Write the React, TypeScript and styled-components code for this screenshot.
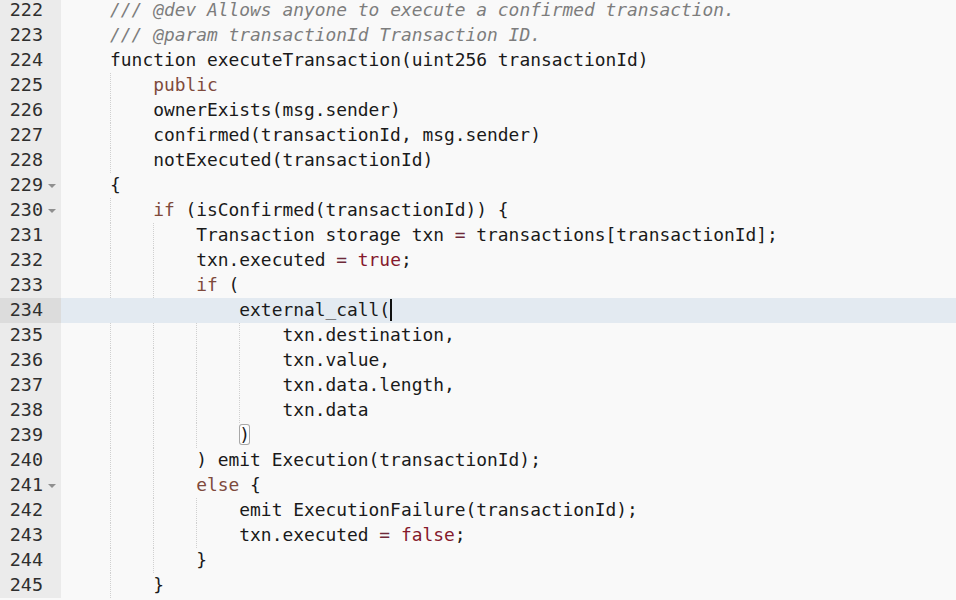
import React from "react";
import styled, { createGlobalStyle } from "styled-components";

const GlobalStyle = createGlobalStyle`
  html, body { margin: 0; padding: 0; background: #f9f9f9; }
  body { overflow: hidden; }
`;

type Kind = "plain" | "comment" | "kw" | "bool" | "op" | "cursor" | "bracket";
type Tok = [string, Kind];
interface LineData {
  n: number;
  indent: number;
  fold?: boolean;
  active?: boolean;
  tokens: Tok[];
}

const lines: LineData[] = [
  { n: 222, indent: 4, tokens: [["/// @dev Allows anyone to execute a confirmed transaction.", "comment"]] },
  { n: 223, indent: 4, tokens: [["/// @param transactionId Transaction ID.", "comment"]] },
  { n: 224, indent: 4, tokens: [["function executeTransaction(uint256 transactionId)", "plain"]] },
  { n: 225, indent: 8, tokens: [["public", "kw"]] },
  { n: 226, indent: 8, tokens: [["ownerExists(msg.sender)", "plain"]] },
  { n: 227, indent: 8, tokens: [["confirmed(transactionId, msg.sender)", "plain"]] },
  { n: 228, indent: 8, tokens: [["notExecuted(transactionId)", "plain"]] },
  { n: 229, indent: 4, fold: true, tokens: [["{", "plain"]] },
  { n: 230, indent: 8, fold: true, tokens: [["if", "kw"], [" (isConfirmed(transactionId)) {", "plain"]] },
  { n: 231, indent: 12, tokens: [["Transaction storage txn ", "plain"], ["=", "op"], [" transactions[transactionId];", "plain"]] },
  { n: 232, indent: 12, tokens: [["txn.executed ", "plain"], ["=", "op"], [" ", "plain"], ["true", "bool"], [";", "plain"]] },
  { n: 233, indent: 12, tokens: [["if", "kw"], [" (", "plain"]] },
  { n: 234, indent: 16, active: true, tokens: [["external_call(", "plain"], ["", "cursor"]] },
  { n: 235, indent: 20, tokens: [["txn.destination,", "plain"]] },
  { n: 236, indent: 20, tokens: [["txn.value,", "plain"]] },
  { n: 237, indent: 20, tokens: [["txn.data.length,", "plain"]] },
  { n: 238, indent: 20, tokens: [["txn.data", "plain"]] },
  { n: 239, indent: 16, tokens: [[")", "bracket"]] },
  { n: 240, indent: 12, tokens: [[") emit Execution(transactionId);", "plain"]] },
  { n: 241, indent: 12, fold: true, tokens: [["else", "kw"], [" {", "plain"]] },
  { n: 242, indent: 16, tokens: [["emit ExecutionFailure(transactionId);", "plain"]] },
  { n: 243, indent: 16, tokens: [["txn.executed ", "plain"], ["=", "op"], [" ", "plain"], ["false", "bool"], [";", "plain"]] },
  { n: 244, indent: 12, tokens: [["}", "plain"]] },
  { n: 245, indent: 8, tokens: [["}", "plain"]] },
];

const Editor = styled.div`
  display: flex;
  flex-direction: column;
  width: 956px;
  height: 600px;
  overflow: hidden;
  background: #f9f9f9;
  font-family: "DejaVu Sans Mono", "Liberation Mono", monospace;
  font-size: 17.9px;
  color: #1a1a1a;
`;

const Rows = styled.div`
  display: flex;
  flex-direction: column;
  margin-top: -2.5px;
`;

const Row = styled.div`
  display: grid;
  grid-template-columns: 61px 1fr;
  height: 25px;
  flex: none;
`;

const GutterCell = styled.div<{ $active?: boolean }>`
  display: flex;
  align-items: center;
  justify-content: flex-end;
  background: ${(p) => (p.$active ? "#dcdcdc" : "#ebebeb")};
  color: #2e2e2e;
  line-height: 24px;
  padding-bottom: 1px;
  box-sizing: border-box;
`;

const LineNo = styled.span`
  font-size: 18.4px;
`;

const FoldSlot = styled.span`
  width: 18px;
  height: 24px;
  display: flex;
  align-items: center;
  padding-left: 5px;
  box-sizing: border-box;
`;

const FoldArrow = styled.span`
  width: 0;
  height: 0;
  border-left: 4px solid transparent;
  border-right: 4px solid transparent;
  border-top: 4.5px solid #8f8f8f;
  margin-top: 2px;
`;

const CodeLine = styled.div<{ $active?: boolean }>`
  display: flex;
  align-items: stretch;
  padding-left: 6px;
  height: 25px;
  line-height: 24px;
  white-space: pre;
  background: ${(p) => (p.$active ? "#e3eaf1" : "transparent")};
`;

const IndentUnit = styled.span<{ $guide: boolean }>`
  flex: none;
  width: 4ch;
  box-sizing: border-box;
  border-left: 1px dotted ${(p) => (p.$guide ? "#d0d0d0" : "transparent")};
`;

const Content = styled.span`
  flex: none;
`;

const Token = styled.span<{ $kind: Kind }>`
  color: ${(p) =>
    p.$kind === "comment"
      ? "#7d7d7d"
      : p.$kind === "kw"
      ? "#7f4a3c"
      : p.$kind === "bool"
      ? "#85192d"
      : p.$kind === "op"
      ? "#6e2a3a"
      : "#1a1a1a"};
  font-style: ${(p) => (p.$kind === "comment" ? "italic" : "normal")};
`;

const Cursor = styled.span`
  display: inline-block;
  width: 2px;
  height: 22px;
  background: #111;
  vertical-align: middle;
  margin-right: -2px;
  position: relative;
  top: -1px;
`;

const Bracket = styled.span`
  box-shadow: inset 0 0 0 1px #a8a8a8;
  border-radius: 3px;
  background: #fdfdfd;
`;

function renderToken([text, kind]: Tok, i: number) {
  if (kind === "cursor") return <Cursor key={i} />;
  if (kind === "bracket") return <Bracket key={i}>{text}</Bracket>;
  return (
    <Token key={i} $kind={kind}>
      {text}
    </Token>
  );
}

export default function App() {
  return (
    <>
      <GlobalStyle />
      <Editor>
        <Rows>
          {lines.map((l) => {
            const units = l.indent / 4;
            return (
              <Row key={l.n}>
                <GutterCell $active={l.active}>
                  <LineNo>{l.n}</LineNo>
                  <FoldSlot>{l.fold ? <FoldArrow /> : null}</FoldSlot>
                </GutterCell>
                <CodeLine $active={l.active}>
                  {Array.from({ length: units }).map((_, i) => (
                    <IndentUnit key={i} $guide={!l.active && i > 0} />
                  ))}
                  <Content>{l.tokens.map(renderToken)}</Content>
                </CodeLine>
              </Row>
            );
          })}
        </Rows>
      </Editor>
    </>
  );
}
